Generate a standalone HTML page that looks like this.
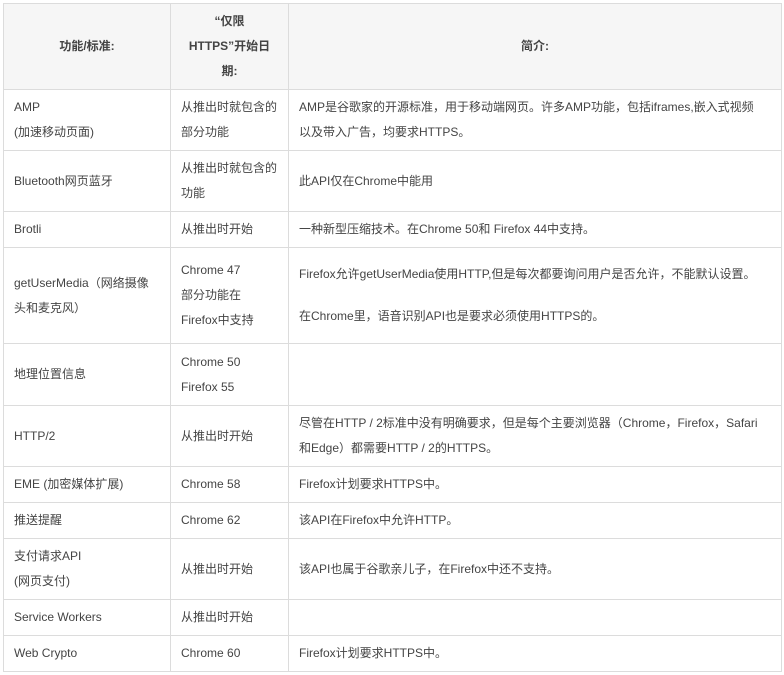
<!DOCTYPE html>
<html><head><meta charset="utf-8"><style>
body{margin:0;background:#fff;}
table{position:absolute;left:3px;top:3px;border-collapse:collapse;font-family:"Liberation Sans","Noto Sans CJK SC",sans-serif;font-size:12px;color:#444;table-layout:fixed;}
td,th{border:1px solid #dcdcdc;padding:0 0 0 10px;line-height:25px;vertical-align:middle;text-align:left;white-space:nowrap;overflow:hidden;}
th{background:#f6f6f6;font-weight:bold;text-align:center;padding:0;color:#444;}
p{margin:0}
</style></head><body>
<table>
<colgroup><col style="width:167px"><col style="width:118px"><col style="width:493px"></colgroup>
<tr style="height:86px"><th>功能/标准:</th><th>“仅限<br>HTTPS”开始日<br>期:</th><th>简介:</th></tr>
<tr style="height:61px"><td>AMP<br>(加速移动页面)</td><td>从推出时就包含的<br>部分功能</td><td>AMP是谷歌家的开源标准，用于移动端网页。许多AMP功能，包括iframes,嵌入式视频<br>以及带入广告，均要求HTTPS。</td></tr>
<tr style="height:61px"><td>Bluetooth网页蓝牙</td><td>从推出时就包含的<br>功能</td><td>此API仅在Chrome中能用</td></tr>
<tr style="height:36px"><td>Brotli</td><td>从推出时开始</td><td>一种新型压缩技术。在Chrome 50和 Firefox 44中支持。</td></tr>
<tr style="height:96px"><td>getUserMedia（网络摄像<br>头和麦克风）</td><td>Chrome 47<br>部分功能在<br>Firefox中支持</td><td><p>Firefox允许getUserMedia使用HTTP,但是每次都要询问用户是否允许，不能默认设置。</p><p style="margin-top:17px">在Chrome里，语音识别API也是要求必须使用HTTPS的。</p></td></tr>
<tr style="height:62px"><td>地理位置信息</td><td>Chrome 50<br>Firefox 55</td><td></td></tr>
<tr style="height:61px"><td>HTTP/2</td><td>从推出时开始</td><td>尽管在HTTP / 2标准中没有明确要求，但是每个主要浏览器（Chrome，Firefox，Safari<br>和Edge）都需要HTTP / 2的HTTPS。</td></tr>
<tr style="height:36px"><td>EME (加密媒体扩展)</td><td>Chrome 58</td><td>Firefox计划要求HTTPS中。</td></tr>
<tr style="height:36px"><td>推送提醒</td><td>Chrome 62</td><td>该API在Firefox中允许HTTP。</td></tr>
<tr style="height:61px"><td>支付请求API<br>(网页支付)</td><td>从推出时开始</td><td>该API也属于谷歌亲儿子，在Firefox中还不支持。</td></tr>
<tr style="height:36px"><td>Service Workers</td><td>从推出时开始</td><td></td></tr>
<tr style="height:36px"><td>Web Crypto</td><td>Chrome 60</td><td>Firefox计划要求HTTPS中。</td></tr>
</table>
</body></html>
